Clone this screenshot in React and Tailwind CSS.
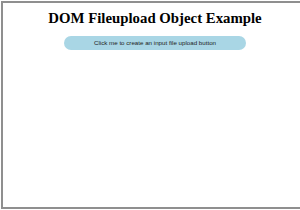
export default function App() {
  return (
    <div className="w-[300px] h-[210px] overflow-hidden bg-white">
      <div className="ml-[1px] mt-[1px] w-[308px] h-[208px] border-2 border-[#8f8f8f] bg-white flex flex-col items-center">
        <h1
          className="mt-[7px] text-[14.8px] leading-[17px] font-bold text-black"
          style={{ fontFamily: '"Liberation Serif", serif' }}
        >
          DOM Fileupload Object Example
        </h1>
        <button
          className="mt-[9px] w-[182px] h-[14px] rounded-full bg-[#a9d6e5] text-[6.2px] text-[#222] flex items-center justify-center"
          style={{ fontFamily: '"Liberation Sans", Arial, sans-serif' }}
        >
          Click me to create an input file upload button
        </button>
      </div>
    </div>
  );
}
